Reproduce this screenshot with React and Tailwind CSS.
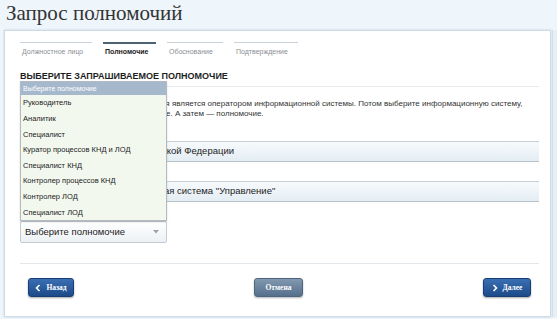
const STEPS = [
  { label: "Должностное лицо", w: "w-[72px]" },
  { label: "Полномочие", w: "w-[53px]", active: true },
  { label: "Обоснование", w: "w-[56px]" },
  { label: "Подтверждение", w: "w-[64px]" },
];

const ROLES = [
  "Руководитель",
  "Аналитик",
  "Специалист",
  "Куратор процессов КНД и ЛОД",
  "Специалист КНД",
  "Контролер процессов КНД",
  "Контролер ЛОД",
  "Специалист ЛОД",
];

function Chevron({ dir }) {
  return (
    <svg width="6" height="8" viewBox="0 0 6 8" className="shrink-0">
      <path
        d={dir === "left" ? "M4.5 1 L1.5 4 L4.5 7" : "M1.5 1 L4.5 4 L1.5 7"}
        fill="none"
        stroke="white"
        strokeWidth="1.6"
      />
    </svg>
  );
}

function Steps() {
  return (
    <div className="flex gap-[11px] pt-[11px]">
      {STEPS.map((s) => (
        <div key={s.label} className={`${s.w} flex flex-col`}>
          <div className={s.active ? "h-[2px] bg-[#4d6373]" : "h-px mb-px bg-[#c9d2da]"} />
          <div
            className={`mt-[3px] pl-[2px] text-[7px] leading-[9px] whitespace-nowrap ${
              s.active ? "text-[#222] font-semibold" : "text-[#8a8f94]"
            }`}
          >
            {s.label}
          </div>
        </div>
      ))}
    </div>
  );
}

function Header({ pad, children }) {
  return (
    <div className={`h-[21px] border-t border-[#c9ced3] border-b border-b-[#b9c1c8] bg-gradient-to-b from-[#f7fafc] to-[#e4edf4] flex items-center ${pad} text-[9.5px] text-[#222] whitespace-nowrap`}>
      {children}
    </div>
  );
}

export default function App() {
  return (
    <div
      className="w-[557px] h-[319px] overflow-hidden bg-[#eef5fb] relative"
      style={{ fontFamily: '"Liberation Sans", Arial, sans-serif' }}
    >
      <div
        className="h-[30px] pl-[6px] pt-px text-[21px] leading-[24px] text-[#333]"
        style={{ fontFamily: '"Liberation Serif", "Times New Roman", serif' }}
      >
        Запрос полномочий
      </div>

      <div className="flex">
        <div className="ml-[4px] w-[547px] h-[287px] bg-white border border-[#cfdbe4] shadow-[0_0_2px_rgba(120,150,170,0.35)] pl-[15px] pr-[11px] flex flex-col">
          <Steps />

          <div className="mt-[15px] text-[9px] leading-[11px] font-bold text-[#1e1e1e] pb-[4px] border-b border-[#e6eaed]">
            ВЫБЕРИТЕ ЗАПРАШИВАЕМОЕ ПОЛНОМОЧИЕ
          </div>

          <div className="pt-[12px] text-[8px] leading-[10px] text-[#333] whitespace-nowrap">
            Сперва выберите организацию, которая является оператором информационной системы. Потом выберите информационную систему,
            <br />
            в которой вы запрашиваете полномочие. А затем — полномочие.
          </div>
          <div className="mt-[8px] mb-[4px] text-[8px] leading-[10px] text-[#333] whitespace-nowrap">
            Выберите организацию из списка ниже
          </div>

          <Header pad="pl-[13px]">Министерство спорта Российской Федерации</Header>
          <div className="h-[19px]" />
          <Header pad="pl-[11px]">Информационно-аналитическая система "Управление"</Header>

          <div className="relative mt-[19px] w-[147px]">
            <div className="absolute bottom-full left-0 w-[147px] border border-[#b3bac1] bg-[#f3f8ef] shadow-[0_1px_2px_rgba(0,0,0,0.15)]">
              <div className="h-[13px] bg-[#a5b8cc] text-white text-[7px] leading-[13px] pl-[2px]">
                Выберите полномочие
              </div>
              {ROLES.map((r) => (
                <div key={r} className="h-[15.6px] flex items-center pl-[2px] text-[7.5px] text-[#222]">
                  {r}
                </div>
              ))}
            </div>
            <div className="h-[22px] rounded-[2px] border border-[#c4cbd2] bg-gradient-to-b from-white to-[#edf1f4] flex items-center justify-between pl-[4px] pr-[7px] text-[9.5px] text-[#222]">
              <span>Выберите полномочие</span>
              <svg width="6" height="4" viewBox="0 0 6 4">
                <path d="M0 0 L6 0 L3 3.5 Z" fill="#9aa3ab" />
              </svg>
            </div>
          </div>

          <div className="mt-[20px] border-t border-[#e3e8ec]" />

          <div className="mt-[14px] flex items-center justify-between pl-[8px] pr-[8px]">
            <button className="h-[19px] w-[46px] rounded-[3px] border border-[#173f75] bg-gradient-to-b from-[#3a6fb3] to-[#1d4a89] shadow-[0_1px_2px_rgba(0,0,0,0.35)] flex items-center justify-center gap-[5px] text-white text-[7.5px] font-bold"
              style={{ fontFamily: '"Liberation Serif", serif' }}>
              <Chevron dir="left" />
              Назад
            </button>
            <button className="h-[19px] w-[49px] rounded-[3px] border border-[#4d6580] bg-gradient-to-b from-[#8298b0] to-[#566f8b] shadow-[0_1px_2px_rgba(0,0,0,0.3)] flex items-center justify-center text-white text-[7.5px] font-bold"
              style={{ fontFamily: '"Liberation Serif", serif' }}>
              Отмена
            </button>
            <button className="h-[19px] w-[48px] rounded-[3px] border border-[#173f75] bg-gradient-to-b from-[#3a6fb3] to-[#1d4a89] shadow-[0_1px_2px_rgba(0,0,0,0.35)] flex items-center justify-center gap-[5px] text-white text-[7.5px] font-bold"
              style={{ fontFamily: '"Liberation Serif", serif' }}>
              <Chevron dir="right" />
              Далее
            </button>
          </div>
        </div>
        <div className="ml-[1px] w-[5px] h-[287px] bg-[#e6eff6] border-l border-[#d3dee7]" />
      </div>
    </div>
  );
}
